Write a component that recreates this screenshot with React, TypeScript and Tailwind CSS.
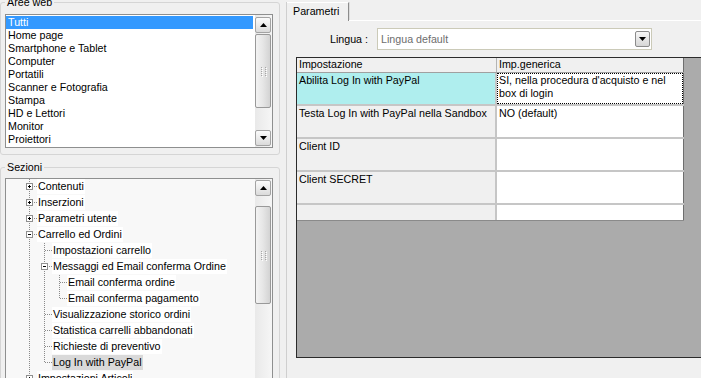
import React from 'react'

const areeWeb = [
  'Tutti',
  'Home page',
  'Smartphone e Tablet',
  'Computer',
  'Portatili',
  'Scanner e Fotografia',
  'Stampa',
  'HD e Lettori',
  'Monitor',
  'Proiettori',
]

type TreeRow = { level: number; text: string; box?: '+' | '-'; last?: boolean; selected?: boolean }

const sezioni: TreeRow[] = [
  { level: 1, text: 'Contenuti', box: '+' },
  { level: 1, text: 'Inserzioni', box: '+' },
  { level: 1, text: 'Parametri utente', box: '+' },
  { level: 1, text: 'Carrello ed Ordini', box: '-' },
  { level: 2, text: 'Impostazioni carrello' },
  { level: 2, text: 'Messaggi ed Email conferma Ordine', box: '-' },
  { level: 3, text: 'Email conferma ordine' },
  { level: 3, text: 'Email conferma pagamento', last: true },
  { level: 2, text: 'Visualizzazione storico ordini' },
  { level: 2, text: 'Statistica carrelli abbandonati' },
  { level: 2, text: 'Richieste di preventivo' },
  { level: 2, text: 'Log In with PayPal', last: true, selected: true },
  { level: 1, text: 'Impostazioni Articoli', box: '+' },
]

const params = [
  { name: 'Abilita Log In with PayPal', value: "SI, nella procedura d'acquisto e nel box di login", active: true },
  { name: 'Testa Log In with PayPal nella Sandbox', value: 'NO (default)' },
  { name: 'Client ID', value: '' },
  { name: 'Client SECRET', value: '' },
]

function Arrow({ dir }: { dir: 'up' | 'down' }) {
  return (
    <svg width="7" height="4" viewBox="0 0 7 4">
      <path d={dir === 'up' ? 'M3.5 0L7 4H0Z' : 'M0 0H7L3.5 4Z'} fill="#000" />
    </svg>
  )
}

function ScrollButton({ dir }: { dir: 'up' | 'down' }) {
  return (
    <div className="flex h-[16px] w-[16px] shrink-0 items-center justify-center rounded-[2px] border border-[#a3a3a3] bg-gradient-to-b from-[#fbfbfb] via-[#ececec] to-[#dadada]">
      <Arrow dir={dir} />
    </div>
  )
}

function Thumb({ className }: { className: string }) {
  return (
    <div
      className={`flex w-[16px] shrink-0 items-center justify-center rounded-[2px] border border-[#999999] bg-gradient-to-r from-[#f3f3f3] via-[#e6e6e6] to-[#d3d3d3] ${className}`}
    >
      <div className="grid grid-cols-2 gap-x-[3px] gap-y-[1px]">
        {Array.from({ length: 10 }).map((_, i) => (
          <div key={i} className="h-[1px] w-[1px] bg-[#a6a6a6] shadow-[1px_1px_0_#ffffff]" />
        ))}
      </div>
    </div>
  )
}

// one indent column of the tree: dotted connector, optional +/- box
function Gutter({ own, last, box }: { own?: boolean; last?: boolean; box?: '+' | '-' }) {
  return (
    <svg width="15" height="16" className="shrink-0" shapeRendering="crispEdges">
      <line x1="7.5" y1="0" x2="7.5" y2={own && last ? 8 : 16} stroke="#8a8a8a" strokeDasharray="1 1" />
      {own && <line x1="8" y1="7.5" x2="15" y2="7.5" stroke="#8a8a8a" strokeDasharray="1 1" />}
      {box && (
        <>
          <rect x="4.5" y="4.5" width="6" height="6" fill="#ffffff" stroke="#8f8f8f" />
          <line x1="6" y1="7.5" x2="9" y2="7.5" stroke="#000" />
          {box === '+' && <line x1="7.5" y1="6" x2="7.5" y2="9" stroke="#000" />}
        </>
      )}
    </svg>
  )
}

function TreeLine({ row }: { row: TreeRow }) {
  const cells = []
  for (let i = 1; i < row.level; i++) cells.push(<Gutter key={i} />)
  cells.push(<Gutter key="own" own last={row.last} box={row.box} />)
  return (
    <div className="flex h-[16px] pl-[16px]">
      {cells}
      <span
        className={`h-[15px] whitespace-nowrap px-[1px] leading-[15px] ${row.selected ? 'bg-[#d9d9d9]' : 'bg-white'}`}
      >
        {row.text}
      </span>
    </div>
  )
}

export default function App() {
  return (
    <div className="flex h-[378px] w-[701px] overflow-hidden bg-[#f0f0f0] font-['Liberation_Sans',Arial,sans-serif] text-[10.7px] leading-[13px] text-black">
      {/* left column: filters */}
      <div className="flex w-[281px] shrink-0 flex-col">
        <fieldset className="-mt-[4px] w-[280px] rounded-[3px] border border-[#d5d5d5]">
          <legend className="ml-[4px] px-[2px] leading-[13px]">Aree web</legend>
          <div className="mb-[6px] ml-[4px] mr-[6px] mt-[5px] flex h-[134px] border border-[#8e8f8f] bg-white">
            <div className="flex-1 pr-[2px] pt-[1px]">
              {areeWeb.map((a, i) => (
                <div
                  key={a}
                  className={i === 0 ? 'h-[13px] bg-[#3399ff] pl-[2px] text-white' : 'h-[13px] pl-[2px]'}
                >
                  {a}
                </div>
              ))}
            </div>
            <div className="flex w-[17px] flex-col bg-gradient-to-r from-[#e9e9e9] to-[#f6f6f6] pb-[1px] pt-[2px]">
              <ScrollButton dir="up" />
              <Thumb className="mt-[1px] h-[74px]" />
              <div className="flex-1" />
              <ScrollButton dir="down" />
            </div>
          </div>
        </fieldset>

        <fieldset className="mt-[6px] w-[280px] rounded-[3px] border border-[#d5d5d5]">
          <legend className="ml-[4px] px-[2px] leading-[13px]">Sezioni</legend>
          <div className="ml-[4px] mr-[6px] mt-[4px] flex h-[230px] border border-[#8e8f8f] bg-[#f8f8f8]">
            <div className="flex-1">
              {sezioni.map((r) => (
                <TreeLine key={r.text} row={r} />
              ))}
            </div>
            <div className="flex w-[17px] flex-col bg-gradient-to-r from-[#e9e9e9] to-[#f6f6f6] pt-[1px]">
              <ScrollButton dir="up" />
              <Thumb className="mt-[10px] h-[98px]" />
            </div>
          </div>
        </fieldset>
      </div>

      {/* right column: tab page */}
      <div className="ml-[5px] mt-[2px] flex flex-1 flex-col border-l border-[#cfcfcf]">
        <div className="flex h-[19px]">
          <div className="border-r border-t border-r-[#8c8c8c] border-t-white pl-[6px] pr-[9px] pt-[2px] shadow-[1px_0_0_#dcdcdc]">
            Parametri
          </div>
          <div className="flex-1 border-b border-white" />
        </div>

        <div className="mt-[7px] flex items-center">
          <div className="w-[81px] text-right">Lingua :</div>
          <div className="ml-[9px] flex h-[22px] w-[275px] items-center border border-[#cbcab8] bg-white">
            <span className="flex-1 pl-[3px] text-[#6d6d6d]">Lingua default</span>
            <div className="mr-[1px] flex h-[16px] w-[15px] items-center justify-center rounded-[2px] border border-[#8b8b8b] bg-gradient-to-b from-[#f7f7f7] to-[#d6d6d6]">
              <Arrow dir="down" />
            </div>
          </div>
        </div>

        <div className="ml-[9px] mt-[7px] h-[301px] overflow-hidden border-b border-l border-t border-[#2b2b2b] bg-[#ababab]">
          <div className="w-[387px]">
            <div className="flex h-[15px] border-b border-[#a0a0a0] bg-[#f0f0f0]">
              <div className="w-[200px] border-r border-[#b4b4b4] pl-[2px]">Impostazione</div>
              <div className="w-[187px] border-r border-[#6e6e6e] pl-[2px]">Imp.generica</div>
            </div>
            {params.map((p) => (
              <div key={p.name} className="flex h-[33px] border-b-2 border-[#c6c6c6]">
                <div
                  className={`w-[200px] border-r-2 border-[#c6c6c6] pl-[2px] pt-[1px] ${p.active ? 'bg-[#afeeee]' : 'bg-[#f0f0f0]'}`}
                >
                  {p.name}
                </div>
                <div className="w-[187px] border-r border-[#6e6e6e] bg-white">
                  <div
                    className={`h-full pl-[1px] ${p.active ? 'border border-dotted border-black pt-0' : 'pl-[2px] pt-[1px]'}`}
                  >
                    {p.value}
                  </div>
                </div>
              </div>
            ))}
            <div className="flex h-[16px] border-b border-[#8a8a8a]">
              <div className="w-[200px] border-r-2 border-[#c6c6c6] bg-[#f0f0f0]" />
              <div className="w-[187px] border-r border-[#6e6e6e] bg-white" />
            </div>
          </div>
        </div>
      </div>
    </div>
  )
}
